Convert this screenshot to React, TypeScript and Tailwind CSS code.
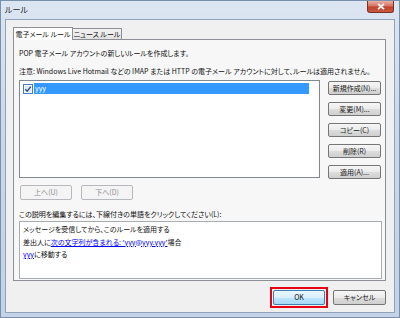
import React from "react";

const font = "font-['Noto_Sans_CJK_JP','Noto_Sans',sans-serif] [font-feature-settings:'palt']";

function WinButton({ label, disabled, className = "" }: { label: string; disabled?: boolean; className?: string }) {
  return (
    <div
      className={
        "flex items-center justify-center rounded-[2px] border text-[7px] leading-none " +
        (disabled
          ? "border-[#b5b9bd] bg-[#f4f4f4] text-[#8d8d8d] "
          : "border-[#767676] bg-[linear-gradient(#f6f6f6,#ebebeb_50%,#dddddd_51%,#cfcfcf)] text-[#1a1a1a] ") +
        className
      }
    >
      {label}
    </div>
  );
}

function CheckBox() {
  return (
    <svg width="10" height="10" viewBox="0 0 10 10" className="shrink-0">
      <rect x="0.5" y="0.5" width="9" height="9" fill="#f4f8fc" stroke="#4a7eb4" />
      <rect x="2" y="2" width="6" height="6" fill="#dfeaf6" />
      <path d="M2.3 5.2 L4.2 7.2 L7.8 2.6" fill="none" stroke="#2a4f86" strokeWidth="1.4" />
    </svg>
  );
}

export default function App() {
  return (
    <div className={"flex h-[318px] w-[400px] flex-col border border-[#7990ad] bg-[linear-gradient(#dce6f2,#cbd8e8_40%,#c3d2e5)] " + font}>
      {/* title bar */}
      <div className="flex h-[18px] shrink-0 items-start justify-between">
        <span className="mt-[4px] ml-[4px] text-[8px] leading-[10px] text-[#1e1e1e]">ルール</span>
        <div className="mr-[5px] flex h-[12px] w-[27px] items-center justify-center rounded-b-[3px] border border-t-0 border-[#7a3025] bg-[linear-gradient(#eab1a6,#d6725f_45%,#c2412c_55%,#c95a3f)]">
          <svg width="8" height="7" viewBox="0 0 8 7">
            <path d="M1 0.8 L7 6.2 M7 0.8 L1 6.2" stroke="#ffffff" strokeWidth="1.8" />
          </svg>
        </div>
      </div>

      {/* client */}
      <div className="mx-[4px] mb-[4px] flex flex-1 flex-col border border-[#8ea2bb] bg-[#f0f0f0] pt-[7px] pl-[7px] pr-[8px] pb-[4px]">
        {/* tabs */}
        <div className="relative z-10 flex h-[13px] items-end pl-0">
          <div className="flex h-[13px] w-[60px] items-center justify-center border border-b-0 border-[#8c8f95] bg-white text-[7px] text-[#111]">
            電子メール ルール
          </div>
          <div className="mb-[1px] flex h-[11px] w-[49px] items-center justify-center border border-l-0 border-b-0 border-[#8c8f95] bg-[linear-gradient(#f3f3f3,#e3e3e3)] text-[7px] text-[#111]">
            ニュース ルール
          </div>
        </div>

        {/* panel */}
        <div className="-mt-[1px] flex h-[242px] flex-col border border-[#8c8f95] bg-[#f7f7f7] pl-[5px] pr-[2px] pt-[8px]">
          <div className="h-[10px] text-[7px] leading-[10px] text-[#111]">POP 電子メール アカウントの新しいルールを作成します。</div>
          <div className="mt-[8px] h-[10px] whitespace-nowrap text-[7px] leading-[10px] text-[#111]">
            注意: Windows Live Hotmail などの IMAP または HTTP の電子メール アカウントに対して、ルールは適用されません。
          </div>

          <div className="mt-[4px] flex gap-[8px]">
            <div className="h-[98px] w-[301px] border border-[#828790] bg-white pl-[3px] pt-[2px] pr-[10px]">
              <div className="flex items-center gap-[1px]">
                <CheckBox />
                <div className="flex h-[11px] flex-1 items-center bg-[#3399ff] pl-[1px] text-[7px] text-white">yyy</div>
              </div>
            </div>
            <div className="flex flex-col gap-[7px] pt-[1px]">
              <WinButton label="新規作成(N)..." className="h-[14px] w-[53px]" />
              <WinButton label="変更(M)..." className="h-[14px] w-[53px]" />
              <WinButton label="コピー(C)" className="h-[14px] w-[53px]" />
              <WinButton label="削除(R)" className="h-[14px] w-[53px]" />
              <WinButton label="適用(A)..." className="h-[14px] w-[53px]" />
            </div>
          </div>

          <div className="mt-[6px] flex gap-[9px] pl-[1px]">
            <WinButton label="上へ(U)" disabled className="h-[15px] w-[52px]" />
            <WinButton label="下へ(D)" disabled className="h-[15px] w-[52px]" />
          </div>

          <div className="mt-[9px] h-[10px] whitespace-nowrap text-[7px] leading-[10px] text-[#111]">
            この説明を編集するには、下線付きの単語をクリックしてください(L):
          </div>

          <div className="mt-[2px] h-[58px] w-[363px] border border-[#a8acb3] bg-white pl-[3px] pt-[1px] text-[7px] leading-[12.5px] text-[#111]">
            <div>メッセージを受信してから、このルールを適用する</div>
            <div>
              差出人に<span className="text-[#0000ff] underline">次の文字列が含まれる: 'yyy@yyy.yyy'</span>場合
            </div>
            <div>
              <span className="text-[#0000ff] underline">yyy</span>に移動する
            </div>
          </div>
        </div>

        {/* bottom buttons */}
        <div className="mt-[6px] flex items-center justify-end gap-[5px] pr-0">
          <div className="border-2 border-[#e60012] p-[1px]">
            <div className="flex h-[15px] w-[52px] items-center justify-center rounded-[2px] border border-[#3c7fb1] bg-[linear-gradient(#eaf6fd,#d9f0fc_50%,#bee6fd_51%,#a7d9f5)] text-[7px] leading-none text-[#111]">
              OK
            </div>
          </div>
          <WinButton label="キャンセル" className="h-[15px] w-[53px]" />
        </div>
      </div>
    </div>
  );
}
